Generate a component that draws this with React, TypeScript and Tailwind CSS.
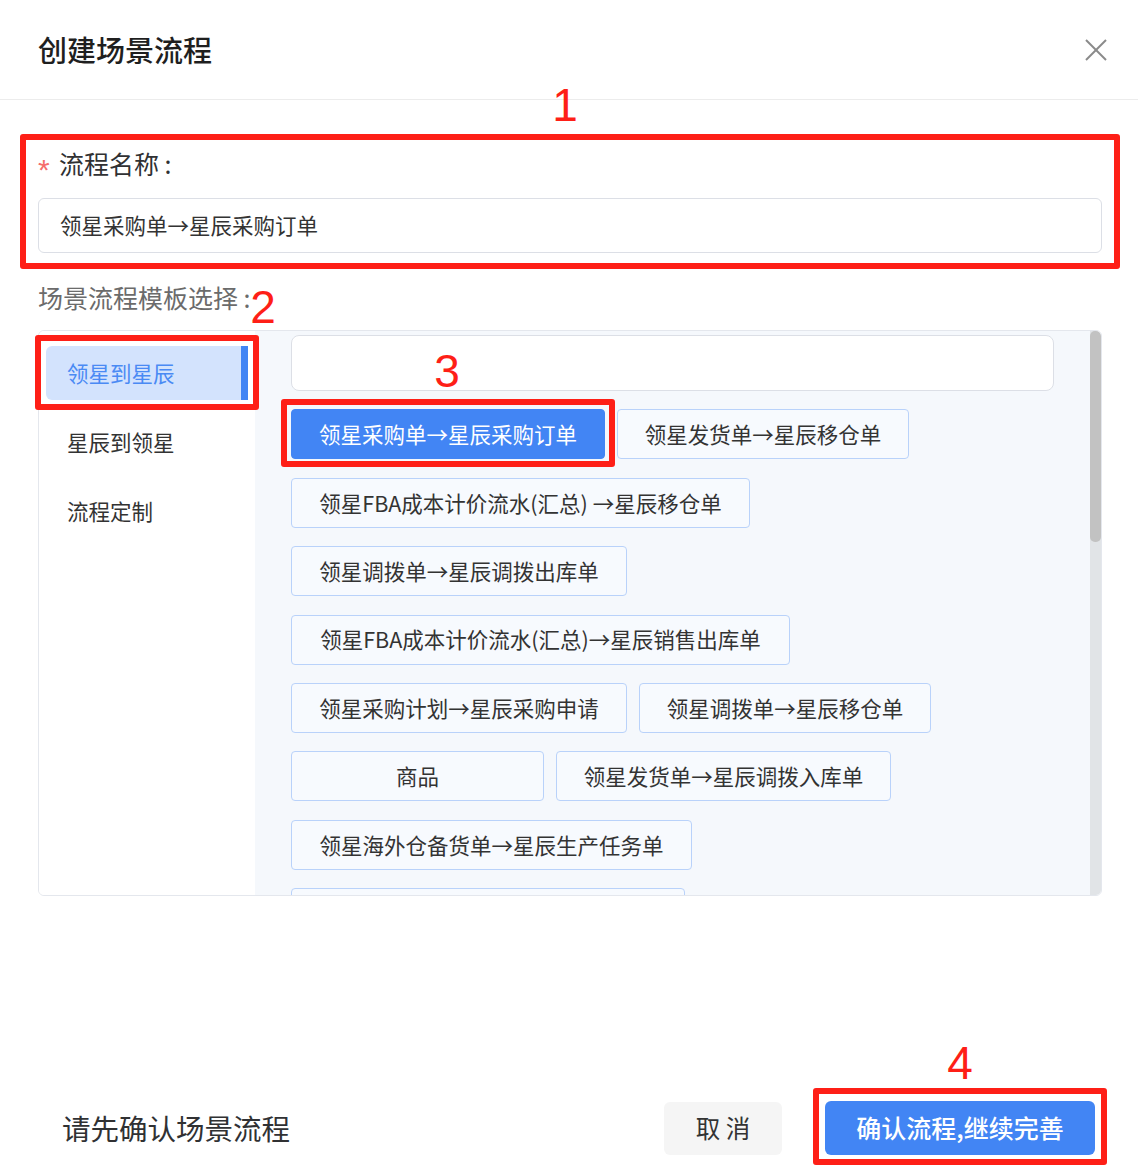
import React from "react";

type Btn = { text: string; w: string; selected?: boolean; center?: boolean };

const rows: Btn[][] = [
  [
    { text: "领星采购单→星辰采购订单", w: "w-[314px]", selected: true },
    { text: "领星发货单→星辰移仓单", w: "w-[292px]" },
  ],
  [{ text: "领星FBA成本计价流水(汇总) →星辰移仓单", w: "w-[459px]" }],
  [{ text: "领星调拨单→星辰调拨出库单", w: "w-[336px]" }],
  [{ text: "领星FBA成本计价流水(汇总)→星辰销售出库单", w: "w-[499px]" }],
  [
    { text: "领星采购计划→星辰采购申请", w: "w-[336px]" },
    { text: "领星调拨单→星辰移仓单", w: "w-[292px]" },
  ],
  [
    { text: "商品", w: "w-[253px]", center: true },
    { text: "领星发货单→星辰调拨入库单", w: "w-[335px]" },
  ],
  [{ text: "领星海外仓备货单→星辰生产任务单", w: "w-[401px]" }],
  [{ text: "", w: "w-[394px]" }],
];

function TemplateButton({ b }: { b: Btn }) {
  return (
    <div
      className={
        "h-[50px] shrink-0 flex items-center justify-center rounded-[4px] border text-[21.5px] whitespace-nowrap " +
        b.w +
        " " +
        (b.selected
          ? "bg-[#4285f4] border-[#4285f4] text-white"
          : "bg-[#f7fafe] border-[#b9d2fa] text-[#333333]")
      }
    >
      {b.text}
    </div>
  );
}

export default function App() {
  return (
    <div className="relative w-[1138px] h-[1176px] bg-white flex flex-col overflow-hidden font-['Noto_Sans_CJK_SC','Noto_Sans',sans-serif]">
      {/* Header */}
      <div className="h-[100px] shrink-0 border-b border-[#ececec] flex items-center justify-between pl-[38px] pr-[31px]">
        <div className="text-[29px] font-medium text-[#1f1f1f] leading-none">创建场景流程</div>
        <svg width="22" height="22" viewBox="0 0 22 22" className="block">
          <line x1="1" y1="1" x2="21" y2="21" stroke="#8a8a8a" strokeWidth="2" />
          <line x1="21" y1="1" x2="1" y2="21" stroke="#8a8a8a" strokeWidth="2" />
        </svg>
      </div>

      {/* Body */}
      <div className="pl-[38px] pr-[36px] flex flex-col">
        <div className="mt-[47px] h-[32px] flex items-center">
          <span className="text-[#f56c6c] text-[30px] w-[21px] leading-none translate-y-[7px] font-['Liberation_Sans',sans-serif]">*</span>
          <span className="text-[25px] text-[#303133] leading-none">流程名称 :</span>
        </div>
        <div className="mt-[19px] h-[55px] border border-[#dcdfe6] rounded-[6px] flex items-center px-[21px] text-[21.5px] text-[#333333]">
          领星采购单→星辰采购订单
        </div>
        <div className="mt-[28px] h-[32px] flex items-center text-[25px] text-[#6b6b6b] leading-none">
          场景流程模板选择 :
        </div>

        {/* Template box */}
        <div className="mt-[17px] h-[566px] border border-[#e4e7ed] rounded-[6px] flex overflow-hidden">
          {/* Left menu */}
          <div className="w-[216px] shrink-0 bg-white pt-[15px] px-[7px] flex flex-col gap-[15px]">
            <div className="h-[54px] flex items-center pl-[21px] bg-[#d3e3fd] text-[#4a8af4] text-[21.5px] rounded-l-[6px] border-r-[7px] border-[#4285f4]">
              领星到星辰
            </div>
            <div className="h-[54px] flex items-center pl-[21px] text-[#333333] text-[21.5px]">星辰到领星</div>
            <div className="h-[54px] flex items-center pl-[21px] text-[#333333] text-[21.5px]">流程定制</div>
          </div>

          {/* Right panel */}
          <div className="flex-1 flex bg-[#f5f8fc] min-w-0">
            <div className="flex-1 min-w-0 px-[36px] pt-[4px] flex flex-col gap-[18.4px] overflow-hidden">
              <div className="h-[56px] shrink-0 bg-white border border-[#dcdfe6] rounded-[8px]" />
              {rows.map((row, i) => (
                <div key={i} className="flex gap-[12px] shrink-0">
                  {row.map((b, j) => (
                    <TemplateButton key={j} b={b} />
                  ))}
                </div>
              ))}
            </div>
            {/* Scrollbar */}
            <div className="w-[11px] shrink-0 bg-[#e1e4e7] flex flex-col">
              <div className="h-[211px] bg-[#c2c2c2] rounded-[5px]" />
            </div>
          </div>
        </div>
      </div>

      {/* Footer */}
      <div className="mt-auto mb-[21px] h-[54px] flex items-center pl-[62px] pr-[43px]">
        <div className="flex-1 text-[28.5px] text-[#303133]">请先确认场景流程</div>
        <div className="w-[118px] h-[53px] rounded-[6px] bg-[#f5f5f5] flex items-center justify-center text-[24.5px] text-[#333333]">
          取 消
        </div>
        <div className="ml-[43px] w-[270px] h-[54px] rounded-[6px] bg-[#4285f4] flex items-center justify-center text-[25px] font-medium text-white">
          确认流程,继续完善
        </div>
      </div>

      {/* Annotation overlays */}
      <div className="pointer-events-none absolute left-[20px] top-[134px] w-[1100px] h-[135px] border-[6px] border-[#fe1f17] rounded-[3px]" />
      <div className="pointer-events-none absolute left-[35px] top-[335px] w-[224px] h-[75px] border-[6px] border-[#fe1f17] rounded-[3px]" />
      <div className="pointer-events-none absolute left-[281px] top-[399px] w-[334px] h-[68px] border-[6px] border-[#fe1f17] rounded-[3px]" />
      <div className="pointer-events-none absolute left-[813px] top-[1088px] w-[294px] h-[77px] border-[6px] border-[#fe1f17] rounded-[3px]" />

      <div className="pointer-events-none absolute left-[545px] top-[82px] w-[40px] text-center text-[46px] leading-none text-[#fe1f17] font-['Liberation_Sans',sans-serif]">1</div>
      <div className="pointer-events-none absolute left-[243px] top-[284px] w-[40px] text-center text-[46px] leading-none text-[#fe1f17] font-['Liberation_Sans',sans-serif]">2</div>
      <div className="pointer-events-none absolute left-[427px] top-[348px] w-[40px] text-center text-[46px] leading-none text-[#fe1f17] font-['Liberation_Sans',sans-serif]">3</div>
      <div className="pointer-events-none absolute left-[940px] top-[1040px] w-[40px] text-center text-[46px] leading-none text-[#fe1f17] font-['Liberation_Sans',sans-serif]">4</div>
    </div>
  );
}
